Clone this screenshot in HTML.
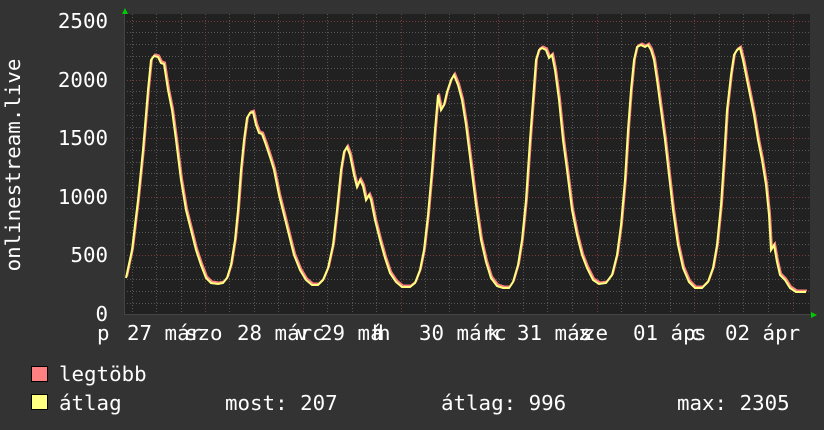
<!DOCTYPE html>
<html><head><meta charset="utf-8"><style>
html,body{margin:0;padding:0;background:#333;width:824px;height:430px;overflow:hidden}
svg{display:block}
text{font-family:"DejaVu Sans Mono","Liberation Mono",monospace;font-size:20.8px;fill:#fff}
</style></head><body>
<svg width="824" height="430" xmlns="http://www.w3.org/2000/svg">
<rect width="824" height="430" fill="#333"/>
<rect x="124" y="14" width="686" height="301" fill="#212121"/>
<g stroke="#555" stroke-width="1" stroke-dasharray="1,2">
<line x1="124" y1="32.5" x2="810" y2="32.5"/><line x1="124" y1="44.5" x2="810" y2="44.5"/><line x1="124" y1="56.5" x2="810" y2="56.5"/><line x1="124" y1="68.5" x2="810" y2="68.5"/>
<line x1="124" y1="91.5" x2="810" y2="91.5"/><line x1="124" y1="103.5" x2="810" y2="103.5"/><line x1="124" y1="115.5" x2="810" y2="115.5"/><line x1="124" y1="127.5" x2="810" y2="127.5"/>
<line x1="124" y1="150.5" x2="810" y2="150.5"/><line x1="124" y1="162.5" x2="810" y2="162.5"/><line x1="124" y1="173.5" x2="810" y2="173.5"/><line x1="124" y1="185.5" x2="810" y2="185.5"/>
<line x1="124" y1="208.5" x2="810" y2="208.5"/><line x1="124" y1="220.5" x2="810" y2="220.5"/><line x1="124" y1="232.5" x2="810" y2="232.5"/><line x1="124" y1="244.5" x2="810" y2="244.5"/>
<line x1="124" y1="267.5" x2="810" y2="267.5"/><line x1="124" y1="279.5" x2="810" y2="279.5"/><line x1="124" y1="291.5" x2="810" y2="291.5"/><line x1="124" y1="303.5" x2="810" y2="303.5"/>
</g>
<g stroke="#555" stroke-width="1" stroke-dasharray="1,2">
<line x1="132.5" y1="14" x2="132.5" y2="315"/><line x1="156.5" y1="14" x2="156.5" y2="315"/><line x1="181.5" y1="14" x2="181.5" y2="315"/>
<line x1="229.5" y1="14" x2="229.5" y2="315"/><line x1="254.5" y1="14" x2="254.5" y2="315"/><line x1="278.5" y1="14" x2="278.5" y2="315"/>
<line x1="327.5" y1="14" x2="327.5" y2="315"/><line x1="352.5" y1="14" x2="352.5" y2="315"/><line x1="376.5" y1="14" x2="376.5" y2="315"/>
<line x1="425.5" y1="14" x2="425.5" y2="315"/><line x1="449.5" y1="14" x2="449.5" y2="315"/><line x1="474.5" y1="14" x2="474.5" y2="315"/>
<line x1="523.5" y1="14" x2="523.5" y2="315"/><line x1="547.5" y1="14" x2="547.5" y2="315"/><line x1="572.5" y1="14" x2="572.5" y2="315"/>
<line x1="621.5" y1="14" x2="621.5" y2="315"/><line x1="645.5" y1="14" x2="645.5" y2="315"/><line x1="670.5" y1="14" x2="670.5" y2="315"/>
<line x1="719.5" y1="14" x2="719.5" y2="315"/><line x1="743.5" y1="14" x2="743.5" y2="315"/><line x1="768.5" y1="14" x2="768.5" y2="315"/>
</g>
<g stroke="#7a3a3a" stroke-width="1" stroke-dasharray="1,2">
<line x1="124" y1="21.5" x2="810" y2="21.5"/><line x1="124" y1="80.5" x2="810" y2="80.5"/><line x1="124" y1="138.5" x2="810" y2="138.5"/><line x1="124" y1="197.5" x2="810" y2="197.5"/><line x1="124" y1="255.5" x2="810" y2="255.5"/>
<line x1="205.5" y1="14" x2="205.5" y2="315"/><line x1="303.5" y1="14" x2="303.5" y2="315"/><line x1="401.5" y1="14" x2="401.5" y2="315"/><line x1="498.5" y1="14" x2="498.5" y2="315"/><line x1="597.5" y1="14" x2="597.5" y2="315"/><line x1="694.5" y1="14" x2="694.5" y2="315"/><line x1="793.5" y1="14" x2="793.5" y2="315"/>
</g>
<line x1="124" y1="314.5" x2="812" y2="314.5" stroke="#444"/>
<line x1="124.5" y1="12" x2="124.5" y2="315" stroke="#444"/>
<polygon points="122,14 128,14 125,8" fill="#0c0"/>
<polygon points="811,312 811,318 817,315" fill="#0c0"/>
<defs><polyline id="c" fill="none" points="126,278 132,250 138,200 143,150 148,90 151,60 154,56 158,57 161,63 164,64 168,90 172,110 176,140 181,180 186,210 191,230 196,250 201,265 206,278 211,283 218,284 223,283 227,278 231,265 235,240 238,210 241,170 244,140 247,118 250,113 253,112 256,125 259,133 262,134 266,145 270,157 274,170 279,195 284,215 289,235 294,255 300,270 306,280 312,285 318,285 323,280 328,268 333,245 337,210 341,170 344,152 347,147 350,155 354,175 357,187 360,180 363,186 366,200 369,195 371,200 375,220 380,240 385,258 390,273 396,282 402,287 410,287 415,283 420,270 424,250 428,215 432,170 435,130 438,95 441,110 444,105 447,92 451,80 454,75 458,85 462,100 466,125 471,165 476,205 481,240 486,262 491,278 497,286 503,288 509,288 513,282 518,265 522,240 526,200 530,140 533,100 536,60 539,50 542,48 546,50 549,58 552,55 555,70 559,100 563,140 567,170 572,210 577,235 582,255 587,268 593,280 599,284 606,283 612,275 617,255 621,225 625,180 628,130 631,90 634,60 637,47 641,45 645,47 648,45 651,50 654,60 657,80 661,110 665,140 669,175 673,210 678,245 683,268 689,282 695,288 702,288 708,282 713,268 717,245 721,205 724,160 727,110 731,75 734,55 737,50 740,48 743,60 746,75 750,95 754,115 758,140 762,160 766,185 769,215 771,250 774,245 777,262 780,275 785,280 790,288 796,292 802,292 806,292"/></defs>
<use href="#c" stroke="#ff8080" stroke-width="2" transform="translate(1,-1.5)"/>
<use href="#c" stroke="#ffff80" stroke-width="2"/>
<g text-anchor="end">
<text x="108" y="28">2500</text><text x="108" y="87">2000</text><text x="108" y="145">1500</text><text x="108" y="204">1000</text><text x="108" y="262">500</text><text x="108" y="321">0</text>
</g>
<text transform="translate(20,165) rotate(-90)" text-anchor="middle">onlinestream.live</text>
<text x="97" y="340">p</text>
<text x="127" y="340">27 már</text><text x="185" y="340">szo</text>
<text x="237" y="340">28 márc</text><text x="296" y="340">v</text>
<text x="320" y="340">29 má</text><text x="378" y="340">h</text><text x="372" y="340">h</text>
<text x="419" y="340">30 márc</text><text x="487" y="340">k</text>
<text x="517" y="340">31 más</text><text x="583" y="340">ze</text><text x="578" y="340">z</text>
<text x="633" y="340">01 áp</text><text x="694" y="340">s</text><text x="690" y="340">c</text>
<text x="725" y="340">02 ápr</text>
<rect x="31.5" y="366.5" width="16" height="15" fill="#ff8080" stroke="#000"/>
<rect x="31.5" y="394.5" width="16" height="15" fill="#ffff80" stroke="#000"/>
<text x="59" y="381">legtöbb</text>
<text x="59" y="410">átlag</text>
<text x="225" y="410">most: 207</text>
<text x="441" y="410">átlag: 996</text>
<text x="677" y="410">max: 2305</text>
</svg>
</body></html>
